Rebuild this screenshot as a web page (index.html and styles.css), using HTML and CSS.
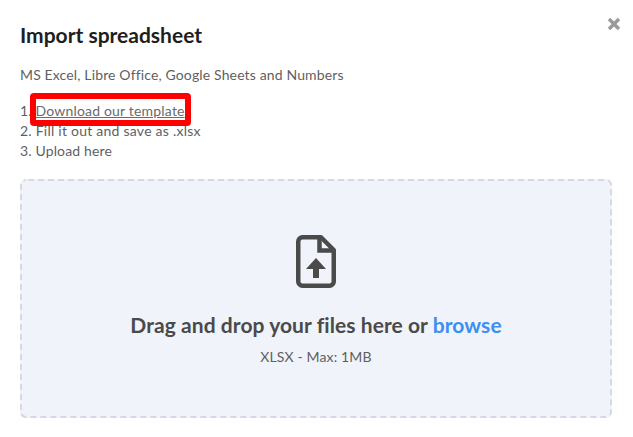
FILE: index.html
```html
<!DOCTYPE html>
<html>
<head>
	<title>Import spreadsheet</title>
	<link rel="stylesheet" href="styles.css">
</head>
<body>
	<div class="modal">
		<button class="close" aria-label="Close">
			<svg width="14" height="14" viewBox="0 0 14 14">
				<path d="M2 2L12 12M12 2L2 12" stroke="#999" stroke-width="3.4" fill="none"/>
			</svg>
		</button>
		<h1>Import spreadsheet</h1>
		<p class="formats">MS Excel, Libre Office, Google Sheets and Numbers</p>
		<ol class="steps">
			<li>1. <a href="#" class="template">Download our template<span class="marker"></span></a></li>
			<li class="fill-step">2. Fill it out and save as .xlsx</li>
			<li>3. Upload here</li>
		</ol>
		<div class="dropzone">
			<svg class="dashes" width="592" height="239">
				<rect x="1" y="1" width="590" height="237" rx="5" fill="none" stroke="#d6d8e2" stroke-width="2" stroke-dasharray="6 4" stroke-dashoffset="-2"/>
			</svg>
			<svg class="file-icon" width="40" height="53" viewBox="0 0 40 53">
				<path d="M6.500 2.250H25L37.750 15V46.500A4.250 4.250 0 0 1 33.500 50.750H6.500A4.250 4.250 0 0 1 2.250 46.500V6.500A4.250 4.250 0 0 1 6.500 2.250Z" fill="none" stroke="#4a4a4a" stroke-width="4.500" stroke-linejoin="round"/>
				<path d="M23.500 3V15.500H37" fill="none" stroke="#4a4a4a" stroke-width="4.500"/>
				<path d="M20 23L30 34H23V43H17V34H10Z" fill="#4a4a4a"/>
			</svg>
			<div class="drop-title">Drag and drop your files here or <span class="browse">browse</span></div>
			<div class="drop-hint">XLSX - Max: 1MB</div>
		</div>
	</div>
</body>
</html>
```
FILE: styles.css
```css
html, body {
	margin: 0;
	height: 100%;
	background-color: white;
}

.modal {
	position: relative;
	padding: 20px 21px 0 20px;
	font-family: 'Lato', sans-serif;
	font-size: 14px;
	line-height: 20px;
	letter-spacing: 0.14px;
	color: #5f5f5f;
}

h1 {
	margin: 0;
	font-size: 21px;
	line-height: 30px;
	font-weight: 700;
	letter-spacing: 0;
	color: #1e1e1e;
}

.close {
	position: absolute;
	top: 17px;
	right: 12px;
	padding: 0;
	border: none;
	background: none;
	line-height: 0;
}

.formats {
	margin: 15px 0 16px 0;
}

.steps {
	list-style: none;
	margin: 0 0 18px 0;
	padding: 0;
}

.fill-step {
	letter-spacing: 0.24px;
}

.template {
	position: relative;
	letter-spacing: 0.19px;
	color: #6a6a6a;
}

.marker {
	position: absolute;
	left: -5px;
	right: -6px;
	top: -9px;
	bottom: -7px;
	border: 6px solid #ff0000;
	border-radius: 4px;
}

.dropzone {
	position: relative;
	display: flex;
	flex-direction: column;
	align-items: center;
	height: 239px;
	box-sizing: border-box;
	padding-top: 56px;
	background-color: #f0f3fa;
	border-radius: 6px;
}

.dashes {
	position: absolute;
	top: 0;
	left: 0;
}

.drop-title {
	margin-top: 22px;
	font-size: 21px;
	line-height: 30px;
	font-weight: 700;
	letter-spacing: 0.07px;
	color: #4a4a4a;
}

.browse {
	color: #3b90f0;
}

.drop-hint {
	margin-top: 7px;
}
```
